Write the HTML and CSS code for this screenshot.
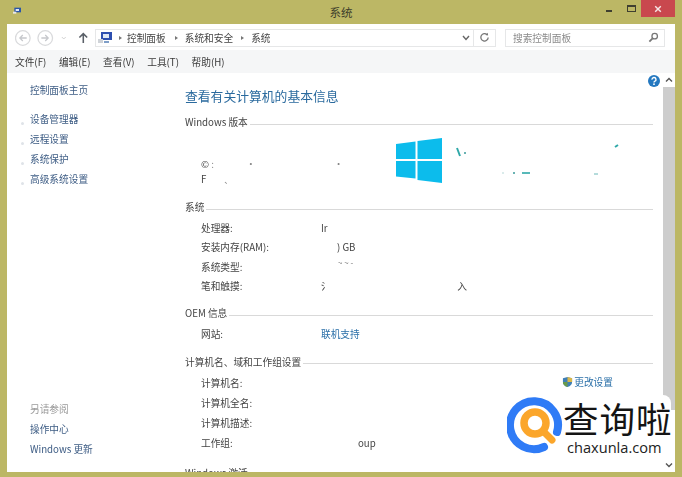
FILE: index.html
```html
<!DOCTYPE html>
<html lang="zh-CN">
<head>
  <meta charset="UTF-8" />
  <title>系统</title>
  <link rel="stylesheet" href="styles.css">
</head>
<body>

  <div class="window">
    <!-- title bar -->
    <div class="titlebar">
      <svg class="title-icon" viewBox="0 0 14 12" xmlns="http://www.w3.org/2000/svg">
        <rect x="3" y="1" width="10" height="7" fill="#2a55a8" />
        <rect x="5" y="3" width="5" height="3" fill="#dfe8f5" />
        <rect x="1" y="7" width="5" height="3" fill="#e8e8e8" />
      </svg>
      <span class="title-text">系统</span>
      <div class="win-controls">
        <span class="win-min"></span>
        <span class="win-max"></span>
        <span class="win-close">
          <svg viewBox="0 0 10 10" xmlns="http://www.w3.org/2000/svg">
            <path d="M 1.5 1.5 L 8.5 8.5 M 8.5 1.5 L 1.5 8.5" stroke="#f6e6e6" stroke-width="1.8" />
          </svg>
        </span>
      </div>
    </div>

    <div class="client">
      <!-- address bar -->
      <div class="toolbar">
        <div class="nav">
          <svg viewBox="0 0 82 18" xmlns="http://www.w3.org/2000/svg">
            <circle cx="8" cy="9" r="7.5" fill="none" stroke="#d9dadc" stroke-width="1.3" />
            <path d="M 12 9 L 5 9 M 8 6 L 5 9 L 8 12" fill="none" stroke="#c6c8cc" stroke-width="1.3" />
            <circle cx="31" cy="9" r="7.5" fill="none" stroke="#d9dadc" stroke-width="1.3" />
            <path d="M 27 9 L 34 9 M 31 6 L 34 9 L 31 12" fill="none" stroke="#c6c8cc" stroke-width="1.3" />
            <path d="M 48 8 L 50 10 L 52 8" fill="none" stroke="#d0d0d0" stroke-width="1" />
            <path d="M 70 14 L 70 4.5 M 66 8.5 L 70 4.5 L 74 8.5" fill="none" stroke="#5a6068" stroke-width="1.6" />
          </svg>
        </div>
        <div class="address">
          <svg class="address-icon" viewBox="0 0 16 14" xmlns="http://www.w3.org/2000/svg">
            <rect x="4" y="1" width="11" height="8" fill="#2d4fb0" />
            <rect x="6" y="3" width="6" height="4" fill="#dfe8f5" />
            <rect x="1" y="8" width="5" height="4" fill="#cfd3d8" />
            <rect x="7" y="10" width="5" height="2" fill="#7f9fc8" />
          </svg>
          <span class="crumb-arrow"></span>
          <span class="crumb crumb-first">控制面板</span>
          <span class="crumb-arrow"></span>
          <span class="crumb">系统和安全</span>
          <span class="crumb-arrow"></span>
          <span class="crumb">系统</span>
          <svg class="address-drop" viewBox="0 0 8 6" xmlns="http://www.w3.org/2000/svg">
            <path d="M 1 1 L 4 4.5 L 7 1" fill="none" stroke="#666" stroke-width="1.4" />
          </svg>
          <span class="refresh">
            <svg viewBox="0 0 12 12" xmlns="http://www.w3.org/2000/svg">
              <path d="M 8.8 3 A 4 4 0 1 0 10 6" fill="none" stroke="#777" stroke-width="1.4" />
              <path d="M 7 3.4 L 10 3.8 L 9.6 0.8 Z" fill="#777" />
            </svg>
          </span>
        </div>
        <div class="search">
          <span>搜索控制面板</span>
          <svg viewBox="0 0 12 12" xmlns="http://www.w3.org/2000/svg">
            <circle cx="7.3" cy="4.6" r="3" fill="none" stroke="#777" stroke-width="1.4" />
            <path d="M 5 7 L 1.5 10.5" stroke="#777" stroke-width="2" />
          </svg>
        </div>
      </div>

      <!-- menu -->
      <div class="menubar">
        <span>文件(F)</span>
        <span>编辑(E)</span>
        <span>查看(V)</span>
        <span>工具(T)</span>
        <span>帮助(H)</span>
      </div>

      <div class="content">
        <div class="sidebar">
          <div class="side-top">
            <a class="side-home">控制面板主页</a>
            <a class="side-link">设备管理器</a>
            <a class="side-link">远程设置</a>
            <a class="side-link">系统保护</a>
            <a class="side-link">高级系统设置</a>
          </div>
          <div class="side-bottom">
            <span class="side-muted">另请参阅</span>
            <a>操作中心</a>
            <a>Windows 更新</a>
          </div>
        </div>

        <div class="main">
          <svg class="help" viewBox="0 0 12 12" xmlns="http://www.w3.org/2000/svg">
            <circle cx="6" cy="6" r="6" fill="#2478c0" />
            <path d="M 4 4.6 A 2 2 0 1 1 6.6 6.4 Q 6 6.7 6 7.6" fill="none" stroke="#fff" stroke-width="1.4" />
            <rect x="5.2" y="8.4" width="1.6" height="1.6" fill="#fff" />
          </svg>
          <h1 class="page-title">查看有关计算机的基本信息</h1>

          <section class="section">
            <h2 class="section-head">Windows 版本</h2>
            <div class="edition">
              <div class="edition-text">
                <p>© <span class="speck">:</span><span class="speck speck-a">·</span><span class="speck speck-b">·</span></p>
                <p>F<span class="speck speck-c">、</span></p>
              </div>
              <svg class="win-logo" viewBox="0 0 230 50" xmlns="http://www.w3.org/2000/svg">
                <path d="M 1 7 L 20.5 4.5 L 20.5 22 L 1 22 Z" fill="#0cbcec" />
                <path d="M 22.5 4 L 47 1 L 47 22 L 22.5 22 Z" fill="#0cbcec" />
                <path d="M 1 24 L 20.5 24 L 20.5 41.5 L 1 39.5 Z" fill="#0cbcec" />
                <path d="M 22.5 24 L 47 24 L 47 46 L 22.5 43 Z" fill="#0cbcec" />
                <path d="M 62 11 L 65 19" stroke="#2fa8a8" stroke-width="2" />
                <circle cx="70" cy="16" r="1" fill="#3a9a9a" />
                <circle cx="108" cy="36" r="0.7" fill="#9ac8c8" />
                <circle cx="119" cy="36" r="1" fill="#3a9a9a" />
                <path d="M 127 36 L 135 36" stroke="#2fa8a8" stroke-width="1.6" />
                <path d="M 199 37 L 203 37" stroke="#6ab8b8" stroke-width="1" />
                <path d="M 220 10 L 223 8" stroke="#2fa8a8" stroke-width="2" />
              </svg>
            </div>
          </section>

          <section class="section">
            <h2 class="section-head">系统</h2>
            <div class="rows">
              <div class="row"><span class="row-label">处理器:</span><span>Ir</span></div>
              <div class="row"><span class="row-label">安装内存(RAM):</span><span class="value-ram">) GB</span></div>
              <div class="row"><span class="row-label">系统类型:</span><span class="value-type">~ ~ -</span></div>
              <div class="row"><span class="row-label">笔和触摸:</span><span class="value-pen"><span>氵</span><span>入</span></span></div>
            </div>
          </section>

          <section class="section">
            <h2 class="section-head">OEM 信息</h2>
            <div class="rows">
              <div class="row"><span class="row-label">网站:</span><a class="row-link">联机支持</a></div>
            </div>
          </section>

          <section class="section section-pc">
            <h2 class="section-head">计算机名、域和工作组设置</h2>
            <div class="rows rows-pc">
              <div class="row"><span class="row-label">计算机名:</span></div>
              <div class="row"><span class="row-label">计算机全名:</span></div>
              <div class="row"><span class="row-label">计算机描述:</span></div>
              <div class="row"><span class="row-label">工作组:</span><span class="value-group">oup</span></div>
              <a class="change-settings">
                <svg viewBox="0 0 12 12" xmlns="http://www.w3.org/2000/svg">
                  <path d="M 6 0.5 L 11 2 L 11 6 Q 11 10 6 11.5 Q 1 10 1 6 L 1 2 Z" fill="#3f7fb5" />
                  <path d="M 6 0.5 L 11 2 L 11 6 L 6 6 Z" fill="#d9b84a" />
                  <path d="M 1 6 L 6 6 L 6 11.5 Q 1 10 1 6 Z" fill="#6a9a4a" />
                </svg>更改设置</a>
            </div>
          </section>

          <section class="section">
            <h2 class="section-head">Windows 激活</h2>
          </section>
        </div>

        <div class="scrollbar">
          <svg class="scroll-arrow" viewBox="0 0 8 6" xmlns="http://www.w3.org/2000/svg">
            <path d="M 1 4.5 L 4 1.5 L 7 4.5" fill="none" stroke="#555" stroke-width="1.4" />
          </svg>
          <div class="scroll-thumb"></div>
          <svg class="scroll-arrow" viewBox="0 0 8 6" xmlns="http://www.w3.org/2000/svg">
            <path d="M 1 1.5 L 4 4.5 L 7 1.5" fill="none" stroke="#555" stroke-width="1.4" />
          </svg>
        </div>
      </div>
    </div>
  </div>

  <!-- watermark sits over the window -->
  <div class="watermark">
    <svg class="wm-logo" viewBox="0 0 60 60" xmlns="http://www.w3.org/2000/svg">
      <path d="M 50 37 A 24 24 0 1 0 37 52" fill="none" stroke="#2f7bf6" stroke-width="8" stroke-linecap="round" />
      <circle cx="28" cy="28" r="11" fill="none" stroke="#fba62b" stroke-width="7.5" />
      <path d="M 37 37 L 45 45" stroke="#fba62b" stroke-width="7" stroke-linecap="round" />
    </svg>
    <div class="wm-text">
      <span class="wm-name">查询啦</span>
      <span class="wm-url">chaxunla.com</span>
    </div>
  </div>

</body>
</html>
```

FILE: styles.css
```css
* { margin: 0; padding: 0; box-sizing: border-box; }
html, body {
  width: 682px;
  height: 477px;
  overflow: hidden;
  background: #bcb765;
  font-family: "Noto Sans CJK SC", "Noto Sans", sans-serif;
  font-size: 9.7px;
  color: #444;
}

.window {
  position: relative;
  display: flex;
  flex-direction: column;
  width: 682px;
  height: 477px;
  padding: 0 7px 5px 7px;
  background: #bcb765;
}

/* title bar */
.titlebar {
  position: relative;
  display: flex;
  align-items: center;
  justify-content: center;
  flex: 0 0 24px;
}

.title-icon {
  position: absolute;
  left: 5px;
  top: 7px;
  width: 10px;
  height: 8px;
}

.title-text {
  font-size: 11.5px;
  color: #3d3d2a;
}

.win-controls {
  position: absolute;
  top: 0;
  right: 0;
  display: flex;
  align-items: flex-start;
}

.win-min {
  width: 6px;
  height: 2px;
  margin-top: 10px;
  margin-right: 15px;
  background: #3f3f30;
}

.win-max {
  width: 9px;
  height: 7px;
  margin-top: 5px;
  margin-right: 5px;
  border: 1px solid #3f3f30;
  border-top-width: 2px;
}

.win-close {
  display: flex;
  align-items: center;
  justify-content: center;
  width: 34px;
  height: 17px;
  background: #c9484e;
}

.win-close svg {
  width: 8px;
  height: 8px;
}

/* client area */
.client {
  display: flex;
  flex-direction: column;
  flex: 1;
  min-height: 0;
  background: #fff;
  filter: blur(0.4px);
}

.toolbar {
  display: flex;
  align-items: center;
  flex: 0 0 26px;
  padding-top: 1px;
}

.nav {
  display: flex;
  flex: 0 0 88px;
  padding-left: 8px;
}

.nav svg {
  width: 80px;
  height: 18px;
}

.address {
  display: flex;
  align-items: center;
  width: 401px;
  height: 18px;
  padding-left: 1px;
  border: 1px solid #e6e7e8;
  font-size: 9.7px;
  color: #444;
}

.address-icon {
  width: 16px;
  height: 14px;
  margin-right: 4px;
}

.crumb-arrow {
  width: 0;
  height: 0;
  margin: 0 4px 0 2px;
  border-left: 3px solid #777;
  border-top: 2.5px solid transparent;
  border-bottom: 2.5px solid transparent;
}

.crumb {
  margin: 0 6px 0 3px;
}

.crumb-first {
  margin: 0 7px 0 1px;
}

.address-drop {
  width: 8px;
  height: 6px;
  margin-left: auto;
  margin-right: 3px;
}

.refresh {
  display: flex;
  align-items: center;
  justify-content: center;
  width: 22px;
  height: 16px;
  border-left: 1px solid #e6e7e8;
}

.refresh svg {
  width: 11px;
  height: 11px;
}

.search {
  display: flex;
  align-items: center;
  justify-content: space-between;
  width: 160px;
  height: 18px;
  margin-left: 9px;
  padding: 0 5px 0 7px;
  border: 1px solid #e6e7e8;
  color: #8a8a8a;
}

.search svg {
  width: 11px;
  height: 11px;
}

.menubar {
  display: flex;
  align-items: center;
  flex: 0 0 23px;
  gap: 12.6px;
  padding-left: 8px;
  background: #f5f6f7;
  color: #3a3a3a;
}

.content {
  display: flex;
  flex: 1;
  min-height: 0;
}

/* left links */
.sidebar {
  display: flex;
  flex-direction: column;
  justify-content: space-between;
  flex: 0 0 178px;
  padding: 10px 0 16px 23px;
  color: #3d5c84;
}

.side-top,
.side-bottom {
  display: flex;
  flex-direction: column;
  gap: 6px;
}

.side-top a,
.side-bottom a,
.side-muted {
  line-height: 14px;
}

.side-home {
  margin-bottom: 9px;
}

.side-link {
  display: flex;
  gap: 6px;
  margin-left: -9px;
}

.side-link::before {
  content: "";
  align-self: flex-end;
  width: 3px;
  height: 3px;
  margin-bottom: 1px;
  border-radius: 50%;
  background: #dfe3e8;
}

.side-muted {
  color: #9a9a9a;
}

/* main panel */
.main {
  position: relative;
  flex: 1;
  min-width: 0;
  overflow: hidden;
  padding: 13px 10px 0 0;
}

.help {
  position: absolute;
  top: 2px;
  right: 3px;
  width: 12px;
  height: 12px;
}

.page-title {
  height: 20px;
  margin-bottom: 8px;
  font-size: 12.8px;
  font-weight: 400;
  line-height: 20px;
  color: #2a6a9e;
}

.section {
  margin-bottom: 9px;
}

.section-head {
  display: flex;
  align-items: center;
  gap: 2px;
  height: 16px;
  font-size: 9.7px;
  font-weight: 400;
  line-height: 16px;
  color: #444;
}

.section-head::after {
  content: "";
  flex: 1;
  height: 1px;
  margin-top: 4px;
  background: #d9d9d9;
}

.edition {
  display: flex;
  justify-content: space-between;
  height: 60px;
  padding-left: 16px;
}

.edition-text {
  padding-top: 27px;
  line-height: 14.5px;
}

.speck {
  color: #888;
}

.speck-a { margin-left: 32px; }
.speck-b { margin-left: 78px; }
.speck-c { margin-left: 18px; font-size: 8px; }

.win-logo {
  position: absolute;
  left: 210px;
  top: 64px;
  width: 230px;
  height: 50px;
}

.rows {
  padding: 3px 0 0 16px;
}

.rows-pc {
  position: relative;
  padding-top: 3px;
}

.row {
  display: flex;
  align-items: center;
  height: 19.5px;
}

.rows-pc .row {
  height: 20px;
}

.row-label {
  flex: 0 0 120px;
}

.row-link {
  color: #2a6fa8;
}

.value-ram { margin-left: 16px; }
.value-type { margin: 0 0 8px 17px; font-size: 8px; color: #777; }

.value-pen {
  display: flex;
  justify-content: space-between;
  width: 146px;
}

.value-group { margin-left: 37px; }

.section-pc {
  margin-top: 10px;
  margin-bottom: 12px;
}

.change-settings {
  position: absolute;
  top: 5px;
  right: 40px;
  display: flex;
  align-items: center;
  gap: 1px;
  font-size: 9.7px;
  color: #2a6fa8;
}

.change-settings svg {
  width: 11px;
  height: 12px;
}

/* scrollbar */
.scrollbar {
  display: flex;
  flex-direction: column;
  align-items: center;
  flex: 0 0 12px;
  background: #fff;
}

.scroll-arrow {
  flex: 0 0 14px;
  width: 8px;
  height: 14px;
}

.scroll-thumb {
  width: 100%;
  height: 323px;
  background: #cdcdcd;
}

.scroll-thumb + .scroll-arrow {
  margin-top: auto;
}

/* watermark */
.watermark {
  position: absolute;
  left: 505px;
  top: 395px;
  display: flex;
  width: 166px;
  height: 63px;
  background: #fff;
  border-radius: 8px;
}

.wm-logo {
  flex: 0 0 60px;
  width: 60px;
  height: 60px;
  margin-left: 2px;
}

.wm-text {
  display: flex;
  flex-direction: column;
  margin-left: -4px;
  padding-top: 2px;
}

.wm-name {
  font-size: 35.5px;
  line-height: 42px;
  letter-spacing: 1px;
  color: #141414;
  white-space: nowrap;
}

.wm-url {
  padding-left: 4px;
  font-family: "Open Sans", sans-serif;
  font-size: 14.6px;
  line-height: 16px;
  color: #222;
}
```
